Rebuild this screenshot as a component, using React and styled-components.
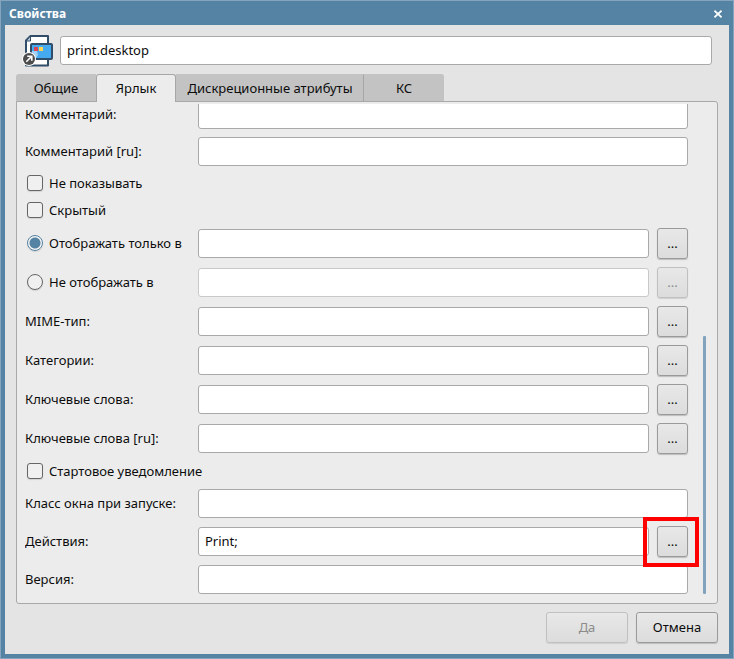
import React, { useState } from "react";
import styled, { createGlobalStyle, css } from "styled-components";

const GlobalStyle = createGlobalStyle`
  *, *::before, *::after { box-sizing: border-box; }
  body {
    margin: 0;
    font: 13px/18px "Noto Sans", "Open Sans", sans-serif;
    color: #0c0c0c;
  }
  input, button { font: inherit; color: inherit; }
`;

const Dialog = styled.main`
  display: flex;
  flex-direction: column;
  min-height: 100vh;
  border: 1px solid #84a5bd;
  background: #5483a4;
  padding: 0 4px 4px;
`;

const TitleBar = styled.header`
  display: flex;
  align-items: center;
  justify-content: space-between;
  height: 24px;
  padding: 2px 6px 0 4px;
  color: #fff;
`;

const Title = styled.h1`
  margin: 0;
  font-size: 12px;
  line-height: 20px;
  font-weight: 700;
`;

const CloseButton = styled.button`
  display: flex;
  padding: 1px;
  border: 0;
  background: none;
`;

const Body = styled.div`
  flex: 1;
  display: flex;
  flex-direction: column;
  padding: 8px 11px 11px;
  background: #e4e4e4;
`;

const NameRow = styled.div`
  display: flex;
  align-items: center;
  gap: 4px;
  padding: 0 6px;

  svg { flex: none; }
`;

const Tabs = styled.div`
  display: flex;
  margin-top: 7px;
`;

const Tab = styled.button`
  height: 28px;
  min-width: ${(p) => (p.$wide ? "188px" : "80px")};
  padding: 0 8px 2px;
  border: 1px solid #c3c3c3;
  border-bottom: 0;
  border-right-color: ${(p) => (p.$wide ? "#a6a6a6" : "#c3c3c3")};
  background: #c3c3c3;
  white-space: nowrap;
  &:first-child { border-top-left-radius: 3px; }
  &:last-child { border-top-right-radius: 3px; }
  ${(p) =>
    p.$active &&
    css`
      border-color: #a6a6a6;
      border-radius: 3px 3px 0 0;
      background: #ececec;
      position: relative;
    `}
`;

const Panel = styled.section`
  flex: 1;
  display: flex;
  margin-top: -1px;
  padding: 2px 11px 9px 8px;
  border: 1px solid #a9a9a9;
  border-radius: 0 3px 3px 3px;
  background: #ececec;
`;

const Viewport = styled.div`
  flex: 1;
  overflow: hidden;
  margin-right: -12px;
  padding-right: 12px;
`;

const Form = styled.form`
  display: flex;
  flex-direction: column;
  gap: 8px;
  margin-top: -4px;
`;

const Row = styled.div`
  display: grid;
  grid-template-columns: 165px minmax(0, 1fr) auto;
  align-items: center;
  column-gap: 8px;
`;

const Label = styled.label`
  display: flex;
  align-items: center;
  gap: 6px;
  height: 19px;
  padding-bottom: 2px;
  line-height: 18px;
  white-space: nowrap;
`;

const TextInput = styled.input`
  width: 100%;
  min-width: 0;
  height: 29px;
  padding: 0 6px 1px;
  border: 1px solid #a9a9a9;
  border-radius: 3px;
  background: #fff;
  outline: none;
  grid-column: ${(p) => (p.$wide ? "2 / 4" : "auto")};
  &:disabled { border-color: #c9c9c9; }
`;

const Mark = styled.input`
  appearance: none;
  flex: none;
  width: 16px;
  height: 16px;
  margin: 0 0 0 2px;
  border: 1px solid #666;
  border-radius: ${(p) => (p.type === "radio" ? "50%" : "3px")};
  background: #f0f0f0;
  box-shadow: 0 1px 1px #d2d2d2;
  &:checked {
    border-color: #5483a4;
    background: ${(p) =>
      p.type === "radio"
        ? "radial-gradient(circle, #5483a4 5px, #f4f4f4 6px)"
        : "#5483a4"};
  }
`;

const Button = styled.button`
  height: 31px;
  width: ${(p) => (p.$small ? "31px" : "82px")};
  padding: 0 0 2px;
  border: 1px solid #9a9a9a;
  border-radius: 3px;
  background: linear-gradient(#e8e8e8, #dcdcdc);
  box-shadow: 0 1px 1px #bdbdbd;
  &:disabled {
    color: #8c8c8c;
    border-color: #c0c0c0;
    box-shadow: 0 1px 1px #d0d0d0;
  }
`;

const ButtonSlot = styled.div`
  position: relative;
  height: 31px;
  ${(p) =>
    p.$highlight &&
    css`
      &::after {
        content: "";
        position: absolute;
        inset: -9px -11px -10px -14px;
        border: 4px solid #f00;
        pointer-events: none;
      }
    `}
`;

const ScrollTrack = styled.div`
  display: flex;
  flex-direction: column;
  justify-content: flex-end;
  width: 3px;
  margin-left: 15px;
`;

const ScrollThumb = styled.div`
  height: 258px;
  border-radius: 1px;
  background: #83a3bc;
`;

const Footer = styled.footer`
  display: flex;
  justify-content: flex-end;
  gap: 8px;
  margin-top: 8px;
`;

function ShortcutIcon() {
  return (
    <svg width="34" height="34" viewBox="0 0 34 34" aria-hidden="true">
      <path d="M8.5 3H26V32.5H4V7.5Z" fill="#fff" stroke="#304d69" strokeWidth="2" strokeLinejoin="round" />
      <path d="M4 8L8.5 3V8Z" fill="#b8c4ce" stroke="#304d69" strokeWidth="1" />
      <rect x="9" y="11" width="21" height="15" rx="1" fill="#46aaf0" stroke="#304d69" strokeWidth="2" />
      <path d="M10 18h5l1 4-2 3h-4Z" fill="#9fd2f6" />
      <rect x="12" y="14" width="4" height="4" fill="#db4455" />
      <rect x="17" y="14" width="4" height="4" fill="#ffd452" />
      <circle cx="7" cy="26" r="7" fill="#fff" />
      <circle cx="7" cy="26" r="6" fill="#4d4d4d" />
      <path d="M4.3 28.7L9.4 23.6M5.2 23.2H9.8V27.8" fill="none" stroke="#fff" strokeWidth="1.6" />
    </svg>
  );
}

function Field({ id, label, value = "", wide, highlight }) {
  return (
    <Row>
      <Label htmlFor={id}>{label}</Label>
      <TextInput id={id} defaultValue={value} $wide={wide} />
      {!wide && (
        <ButtonSlot $highlight={highlight}>
          <Button type="button" $small>...</Button>
        </ButtonSlot>
      )}
    </Row>
  );
}

function RadioField({ label, checked, onChange }) {
  return (
    <Row>
      <Label>
        <Mark type="radio" name="display" checked={checked} onChange={onChange} />
        {label}
      </Label>
      <TextInput aria-label={label} disabled={!checked} />
      <ButtonSlot>
        <Button type="button" $small disabled={!checked}>...</Button>
      </ButtonSlot>
    </Row>
  );
}

function CheckField({ label }) {
  return (
    <Label>
      <Mark type="checkbox" />
      {label}
    </Label>
  );
}

export default function App() {
  const [display, setDisplay] = useState("only");
  return (
    <>
      <GlobalStyle />
      <Dialog>
        <TitleBar>
          <Title>Свойства</Title>
          <CloseButton aria-label="Закрыть">
            <svg width="8" height="8" viewBox="0 0 8 8">
              <path d="M0.4 0.7L7.6 7.3M7.6 0.7L0.4 7.3" stroke="#fff" strokeWidth="1.8" />
            </svg>
          </CloseButton>
        </TitleBar>
        <Body>
          <NameRow>
            <ShortcutIcon />
            <TextInput aria-label="Имя" defaultValue="print.desktop" />
          </NameRow>
          <Tabs role="tablist">
            <Tab role="tab">Общие</Tab>
            <Tab role="tab" aria-selected="true" $active>Ярлык</Tab>
            <Tab role="tab" $wide>Дискреционные атрибуты</Tab>
            <Tab role="tab">КС</Tab>
          </Tabs>
          <Panel>
            <Viewport>
              <Form>
                <Field id="comment" label="Комментарий:" wide />
                <Field id="comment-ru" label="Комментарий [ru]:" wide />
                <CheckField label="Не показывать" />
                <CheckField label="Скрытый" />
                <RadioField
                  label="Отображать только в"
                  checked={display === "only"}
                  onChange={() => setDisplay("only")}
                />
                <RadioField
                  label="Не отображать в"
                  checked={display === "not"}
                  onChange={() => setDisplay("not")}
                />
                <Field id="mime" label="MIME-тип:" />
                <Field id="categories" label="Категории:" />
                <Field id="keywords" label="Ключевые слова:" />
                <Field id="keywords-ru" label="Ключевые слова [ru]:" />
                <CheckField label="Стартовое уведомление" />
                <Field id="wm-class" label="Класс окна при запуске:" wide />
                <Field id="actions" label="Действия:" value="Print;" highlight />
                <Field id="version" label="Версия:" wide />
              </Form>
            </Viewport>
            <ScrollTrack>
              <ScrollThumb />
            </ScrollTrack>
          </Panel>
          <Footer>
            <Button type="button" disabled>Да</Button>
            <Button type="button">Отмена</Button>
          </Footer>
        </Body>
      </Dialog>
    </>
  );
}
